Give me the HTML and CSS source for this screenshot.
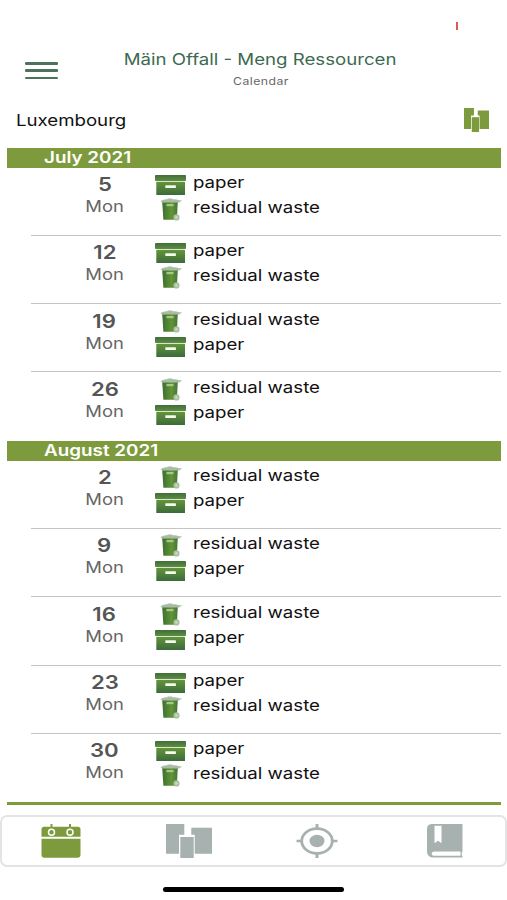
FILE: index.html
```
<!DOCTYPE html>
<html lang="en">

<head>
    <meta charset="UTF-8">
    <meta name="viewport" content="width=device-width, initial-scale=1.0">
    <title>Mäin Offall - Meng Ressourcen</title>
    <link rel="stylesheet" href="styles.css">
</head>

<body>
    <!-- Shared icons -->
    <svg class="sprite" width="0" height="0">
        <defs>
            <linearGradient id="green" x1="0" y1="0" x2="0" y2="1">
                <stop offset="0" stop-color="#63963a" />
                <stop offset="1" stop-color="#3d6a3c" />
            </linearGradient>
            <linearGradient id="lid" x1="0" y1="0" x2="0" y2="1">
                <stop offset="0" stop-color="#3f6e38" />
                <stop offset="1" stop-color="#608c43" />
            </linearGradient>
            <linearGradient id="bin" x1="0" y1="0" x2="1" y2="0">
                <stop offset="0" stop-color="#3c7030" />
                <stop offset="0.6" stop-color="#629438" />
                <stop offset="1" stop-color="#447638" />
            </linearGradient>
        </defs>
        <symbol id="paper" viewBox="0 0 31 20">
            <rect x="0" y="0" width="31" height="6" rx="0.8" fill="url(#lid)" />
            <rect x="1.3" y="6.7" width="28.7" height="13.3" rx="0.6" fill="url(#green)" />
            <rect x="10.3" y="10.2" width="10.6" height="2.8" rx="0.6" fill="#f4faec" />
        </symbol>
        <symbol id="waste" viewBox="0 0 22 23">
            <path d="M2.2 4h15.6l-1 17.8H3.4z" fill="url(#bin)" />
            <path d="M0.6 3.2C2.5 1.8 5 1.3 7.5 1.3V.5h4.800v.8c3 0 5.400.3 6.500 1h2.600v1.200h-1.600l-.5 1H2z" fill="#a9bda5" />
            <path d="M6.500 6h7v2.200h-7z" fill="#a8c784" />
            <circle cx="16.500" cy="19.400" r="3.100" fill="#a9c09f" />
            <circle cx="16.500" cy="19.400" r="1.300" fill="#c9d8c0" />
        </symbol>
        <symbol id="containers" viewBox="0 0 46 34" preserveAspectRatio="none">
            <path d="M0 0h18.300v10.700h-5.300v19H0zM25.300 3.700H46v26H28.700v-19h-3.400z" />
            <rect x="14.300" y="13" width="13.400" height="21" />
        </symbol>
    </svg>

    <div class="statusbar"><span class="battery"></span></div>

    <header>
        <button class="menu" aria-label="Menu"><i></i><i></i><i></i></button>
        <div class="titles">
            <h1><span>Mäin Offall - Meng Ressourcen</span></h1>
            <p><span>Calendar</span></p>
        </div>
    </header>

    <div class="location">
        <span class="city">Luxembourg</span>
        <svg class="filter"><use href="#containers" /></svg>
    </div>

    <main>
        <section>
            <h2><span>July 2021</span></h2>
            <div class="day">
                <div class="date"><b>5</b><span>Mon</span></div>
                <ul>
                    <li><svg class="paper"><use href="#paper" /></svg><span>paper</span></li>
                    <li><svg class="waste"><use href="#waste" /></svg><span>residual waste</span></li>
                </ul>
            </div>
            <div class="day">
                <div class="date"><b>12</b><span>Mon</span></div>
                <ul>
                    <li><svg class="paper"><use href="#paper" /></svg><span>paper</span></li>
                    <li><svg class="waste"><use href="#waste" /></svg><span>residual waste</span></li>
                </ul>
            </div>
            <div class="day">
                <div class="date"><b>19</b><span>Mon</span></div>
                <ul>
                    <li><svg class="waste"><use href="#waste" /></svg><span>residual waste</span></li>
                    <li><svg class="paper"><use href="#paper" /></svg><span>paper</span></li>
                </ul>
            </div>
            <div class="day">
                <div class="date"><b>26</b><span>Mon</span></div>
                <ul>
                    <li><svg class="waste"><use href="#waste" /></svg><span>residual waste</span></li>
                    <li><svg class="paper"><use href="#paper" /></svg><span>paper</span></li>
                </ul>
            </div>
        </section>

        <section>
            <h2><span>August 2021</span></h2>
            <div class="day">
                <div class="date"><b>2</b><span>Mon</span></div>
                <ul>
                    <li><svg class="waste"><use href="#waste" /></svg><span>residual waste</span></li>
                    <li><svg class="paper"><use href="#paper" /></svg><span>paper</span></li>
                </ul>
            </div>
            <div class="day">
                <div class="date"><b>9</b><span>Mon</span></div>
                <ul>
                    <li><svg class="waste"><use href="#waste" /></svg><span>residual waste</span></li>
                    <li><svg class="paper"><use href="#paper" /></svg><span>paper</span></li>
                </ul>
            </div>
            <div class="day">
                <div class="date"><b>16</b><span>Mon</span></div>
                <ul>
                    <li><svg class="waste"><use href="#waste" /></svg><span>residual waste</span></li>
                    <li><svg class="paper"><use href="#paper" /></svg><span>paper</span></li>
                </ul>
            </div>
            <div class="day">
                <div class="date"><b>23</b><span>Mon</span></div>
                <ul>
                    <li><svg class="paper"><use href="#paper" /></svg><span>paper</span></li>
                    <li><svg class="waste"><use href="#waste" /></svg><span>residual waste</span></li>
                </ul>
            </div>
            <div class="day">
                <div class="date"><b>30</b><span>Mon</span></div>
                <ul>
                    <li><svg class="paper"><use href="#paper" /></svg><span>paper</span></li>
                    <li><svg class="waste"><use href="#waste" /></svg><span>residual waste</span></li>
                </ul>
            </div>
        </section>
    </main>

    <nav>
        <a class="active" aria-label="Calendar">
            <svg width="40" height="34" viewBox="0 0 40 34">
                <path d="M3 2.700h34q2.500 0 2.500 2.500v7.500H.5V5.200Q.5 2.700 3 2.700zM.5 14.700h39v16q0 3-3 3h-33q-3 0-3-3z" />
                <path d="M9.500 0h2v5h-2zM28 0h2v5h-2z" />
                <g fill="none" stroke="#fff" stroke-width="1.500">
                    <circle cx="10.500" cy="8.300" r="3" />
                    <circle cx="29" cy="8.300" r="3" />
                </g>
            </svg>
        </a>
        <a aria-label="Containers">
            <svg width="46" height="34"><use href="#containers" /></svg>
        </a>
        <a aria-label="Nearby">
            <svg width="42" height="34" viewBox="0 0 42 34">
                <ellipse cx="21" cy="17" rx="15.300" ry="12.400" fill="none" stroke="currentColor" stroke-width="2.800" />
                <ellipse cx="21" cy="17" rx="7.500" ry="6.200" />
                <path d="M19.500 0h3v5h-3zM19.500 29h3v5h-3zM.5 15.800h5.500v2.400H.5zM36 15.800h5.500v2.400H36z" />
            </svg>
        </a>
        <a aria-label="Guide">
            <svg width="36" height="34" viewBox="0 0 36 34">
                <path fill-rule="evenodd" d="M5.500 0H35.500v27.500l-.8 1.500v2.300l.8.7v1.500H7Q0 33.500 0 27.500V5Q0 0 5.500 0zM7.500 1.700v17.600l3.500-2.500 3.500 2.500V1.700zM8 27.500q-3.300 0-3.300 2.200T8 31.800h25.500V27.500z" />
            </svg>
        </a>
    </nav>

    <div class="home-bar"></div>
</body>

</html>
```
FILE: styles.css
```
* {
    margin: 0;
    padding: 0;
    box-sizing: border-box;
}

body {
    height: 900px;
    font-family: Inter, 'Liberation Sans', sans-serif;
    background-color: #fff;
    color: #111;
    overflow: hidden;
}

.sprite {
    display: block;
}

svg {
    flex: none;
    fill: currentColor;
}

/* wide lettering */
h1 span,
h2 span,
.titles p span,
.city,
.date b,
.date span,
li span {
    display: inline-block;
    transform: scaleX(1.165);
    white-space: nowrap;
}

h2 span,
.city,
li span {
    transform-origin: left;
}

.statusbar {
    height: 46px;
    padding: 22px 49px 0 0;
    display: flex;
    justify-content: flex-end;
}

.battery {
    width: 2px;
    height: 8px;
    background-color: #e2574f;
}

header {
    height: 54px;
    display: grid;
    grid-template-columns: 70px 1fr 56px;
}

.menu {
    width: 33px;
    height: 17px;
    margin: 16px 0 0 25px;
    border: none;
    background: none;
    display: flex;
    flex-direction: column;
    justify-content: space-between;
}

.menu i {
    height: 2.500px;
    border-radius: 1px;
    background-color: #4a735a;
}

.titles {
    text-align: center;
    padding-top: 3px;
}

h1 {
    font-size: 16px;
    line-height: 20px;
    font-weight: 400;
    color: #3d6a50;
}

.titles p {
    margin-top: 5px;
    font-size: 10.500px;
    line-height: 16px;
    letter-spacing: 0.4px;
    color: #666;
}

.location {
    height: 47.500px;
    padding: 8px 18px 0 16px;
    display: flex;
    justify-content: space-between;
}

.city {
    font-size: 16px;
    line-height: 24px;
}

.filter {
    width: 25px;
    height: 24px;
    color: #7d9b3c;
}

main {
    margin: 0 6px 0 7px;
    border-bottom: 3px solid #7d9b3c;
}

h2 {
    height: 20px;
    padding-left: 37px;
    background-color: #7d9b3c;
    color: #fff;
    font-size: 15.500px;
    line-height: 19px;
    font-weight: 600;
}

h2 span {
    transform: scaleX(1.215);
}

.day {
    height: 68.300px;
    margin-left: 24px;
    padding-top: 2.500px;
    display: flex;
    border-bottom: 1px solid #c4c4c4;
}

.day:last-child {
    border-bottom: none;
}

.date {
    width: 147px;
    display: flex;
    flex-direction: column;
    align-items: center;
    margin-right: -23px;
    color: #666;
}

.date b {
    font-size: 19px;
    line-height: 30px;
    font-weight: 600;
    color: #555;
}

.date span {
    font-size: 15.800px;
    line-height: 13px;
}

li {
    height: 25px;
    display: flex;
    align-items: flex-start;
    font-size: 16px;
    line-height: 25px;
}

.paper {
    width: 31px;
    height: 20px;
    margin: 5px 7px 0 0;
}

.waste {
    width: 22px;
    height: 23px;
    margin: 3px 11px 0 5px;
}

nav {
    height: 52px;
    margin-top: 10px;
    border: 2px solid #e4e4e4;
    border-radius: 7px;
    display: grid;
    grid-template-columns: repeat(4, 128px);
    justify-content: center;
    color: #a7b1b0;
}

nav a {
    display: flex;
    justify-content: center;
    align-items: center;
    padding-right: 2px;
}

nav .active {
    color: #7d9b3c;
}

.home-bar {
    width: 181px;
    height: 5px;
    margin: 20px auto 0;
    border-radius: 3px;
    background-color: #000;
}
```
